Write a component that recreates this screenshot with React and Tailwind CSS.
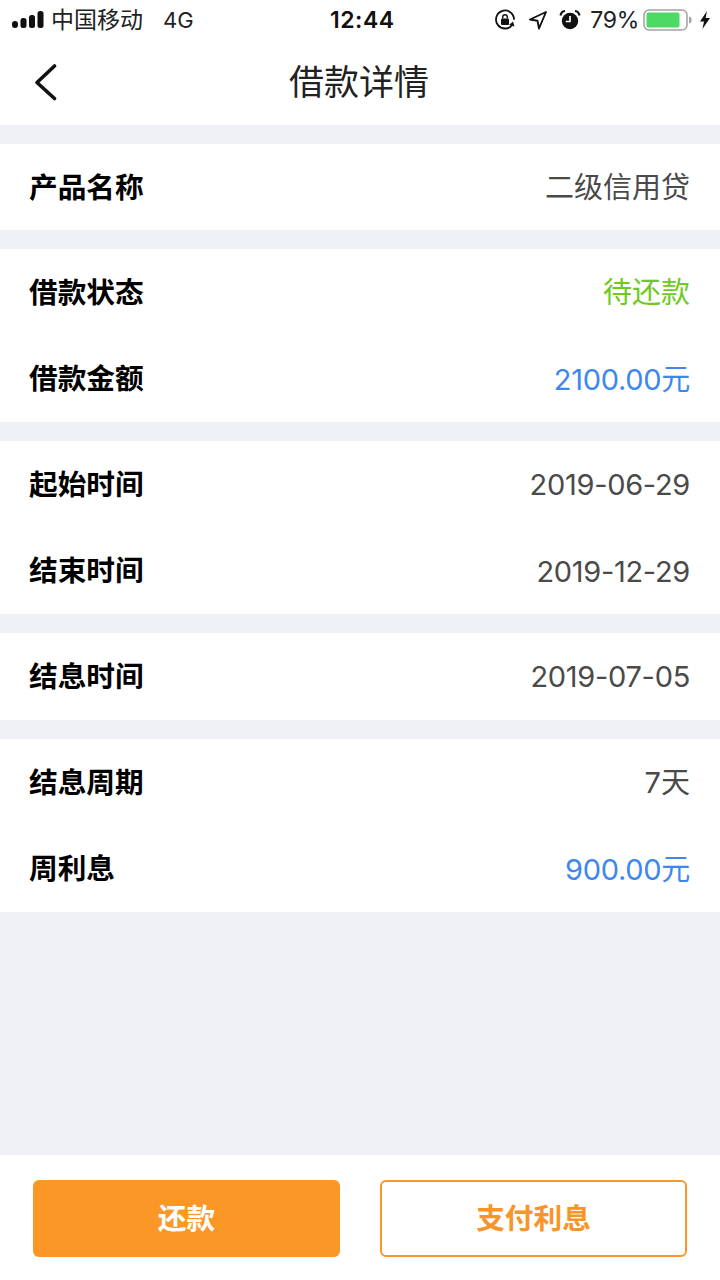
const fontClass = "font-['Inter','Noto_Sans_CJK_SC',sans-serif]";

const gray = "text-[#4a4a4a]";
const blue = "text-[#3d87ee]";

const sections = [
  {
    height: "h-[86px]",
    rows: [{ label: "产品名称", value: "二级信用贷", color: gray, tight: false }],
  },
  {
    height: "h-[173px]",
    rows: [
      { label: "借款状态", value: "待还款", color: "text-[#6fc91e]", tight: false },
      { label: "借款金额", value: "2100.00元", color: blue, tight: true },
    ],
  },
  {
    height: "h-[173px]",
    rows: [
      { label: "起始时间", value: "2019-06-29", color: gray, tight: true },
      { label: "结束时间", value: "2019-12-29", color: gray, tight: true },
    ],
  },
  {
    height: "h-[87px]",
    rows: [{ label: "结息时间", value: "2019-07-05", color: gray, tight: true }],
  },
  {
    height: "h-[173px]",
    rows: [
      { label: "结息周期", value: "7天", color: gray, tight: false },
      { label: "周利息", value: "900.00元", color: blue, tight: true },
    ],
  },
];

const Row = ({ label, value, color, tight }) => (
  <div className="flex flex-1 items-center justify-between pl-[29px] pr-[30px]">
    <span className="pt-[0.5px] text-[28.7px] font-bold text-black">{label}</span>
    <span className={`pt-[1px] text-[29px] ${tight ? "tracking-[-0.3px]" : ""} ${color}`}>
      {value}
    </span>
  </div>
);

const SignalBars = () => (
  <svg width="32" height="20" viewBox="0 0 32 20" fill="#111">
    <rect x="0" y="11" width="6" height="7" rx="3" />
    <rect x="8.5" y="8" width="6" height="10" rx="2.5" />
    <rect x="17" y="5" width="6" height="13" rx="2.5" />
    <rect x="25.5" y="1" width="6" height="17" rx="2.5" />
  </svg>
);

const RotationLock = () => (
  <svg width="22" height="22" viewBox="0 0 22 22" fill="none">
    <path d="M18.5 15.5A9 9 0 1 1 20 10" stroke="#111" strokeWidth="1.8" strokeLinecap="round" />
    <path d="M20.5 17.5l-5.5-1.5 4-3.5z" fill="#111" />
    <rect x="7" y="9.5" width="8" height="6.5" rx="1" fill="#111" />
    <path d="M8.7 9.5V8a2.3 2.3 0 0 1 4.6 0v1.5" stroke="#111" strokeWidth="1.4" />
  </svg>
);

const LocationArrow = () => (
  <svg width="20" height="20" viewBox="0 0 20 20" fill="none">
    <path d="M18 2L2 9.5l7.5 1.2L11 18.5z" stroke="#111" strokeWidth="1.9" strokeLinejoin="round" />
  </svg>
);

const AlarmClock = () => (
  <svg width="22" height="22" viewBox="0 0 22 22" fill="none">
    <circle cx="11" cy="12" r="8.2" fill="#111" />
    <path d="M11 7v5.5H6.8" stroke="#fff" strokeWidth="1.7" />
    <path d="M1.5 6.5C2 3.8 3.8 2.2 6 2M20.5 6.5C20 3.8 18.2 2.2 16 2" stroke="#111" strokeWidth="2.2" />
  </svg>
);

const Battery = () => (
  <svg width="50" height="24" viewBox="0 0 50 24" fill="none">
    <rect x="1" y="2" width="43" height="20" rx="5" stroke="#a3a3a3" strokeWidth="1.5" />
    <rect x="3.5" y="4.5" width="33" height="15" rx="2" fill="#4cd964" />
    <path d="M46 8.5c2 .6 2.6 1.8 2.6 3.5s-.6 2.9-2.6 3.5z" fill="#a3a3a3" />
  </svg>
);

const Bolt = () => (
  <svg width="12" height="20" viewBox="0 0 12 20" fill="#111">
    <path d="M8 1L1 11.5h4L3.5 19 11 8H6.6z" />
  </svg>
);

const StatusBar = () => (
  <div className="relative flex h-10 items-center justify-between pl-3 pr-[9px]">
    <div className="flex items-center">
      <SignalBars />
      <span className="ml-[7px] text-[23px] text-[#222]">中国移动</span>
      <span className="ml-[20px] text-[22px] text-[#222]">4G</span>
    </div>
    <span className="absolute left-[330px] text-[23px] font-semibold tracking-[0.5px] text-[#111]">
      12:44
    </span>
    <div className="flex items-center">
      <RotationLock />
      <span className="ml-[12px]"><LocationArrow /></span>
      <span className="ml-[11px]"><AlarmClock /></span>
      <span className="ml-[9px] text-[23px] tracking-[-0.3px] text-[#222]">79%</span>
      <span className="ml-[4px]"><Battery /></span>
      <span className="ml-[6px]"><Bolt /></span>
    </div>
  </div>
);

const NavBar = () => (
  <div className="relative flex h-[85px] items-center justify-center pr-[2px]">
    <svg className="absolute left-[33px] top-[23px]" width="26" height="38" viewBox="0 0 26 38" fill="none">
      <path d="M21.5 3L4 19.5 21.5 35.5" stroke="#111" strokeWidth="3.6" strokeLinecap="round" strokeLinejoin="round" />
    </svg>
    <span className="text-[35px] text-[#222]">借款详情</span>
  </div>
);

export default function App() {
  return (
    <div className={`flex h-[1280px] w-[720px] flex-col overflow-hidden bg-[#eff1f5] ${fontClass}`}>
      <div className="bg-white">
        <StatusBar />
        <NavBar />
      </div>
      <div className="flex flex-1 flex-col gap-[19px] pt-[19px]">
        {sections.map((section, i) => (
          <div key={i} className={`flex flex-col bg-white ${section.height}`}>
            {section.rows.map((row) => (
              <Row key={row.label} {...row} />
            ))}
          </div>
        ))}
      </div>
      <div className="flex h-[125px] gap-[40px] bg-white pl-[33px] pt-[25px]">
        <button type="button" className="flex h-[77px] w-[307px] items-center justify-center rounded-md bg-[#fb9726] pt-[1px] text-[28.7px] font-bold text-white">
          还款
        </button>
        <button type="button" className="flex h-[77px] w-[307px] items-center justify-center rounded-md border-2 border-[#fb9726] bg-white pt-[1px] text-[28.7px] font-bold text-[#f7942a]">
          支付利息
        </button>
      </div>
    </div>
  );
}
